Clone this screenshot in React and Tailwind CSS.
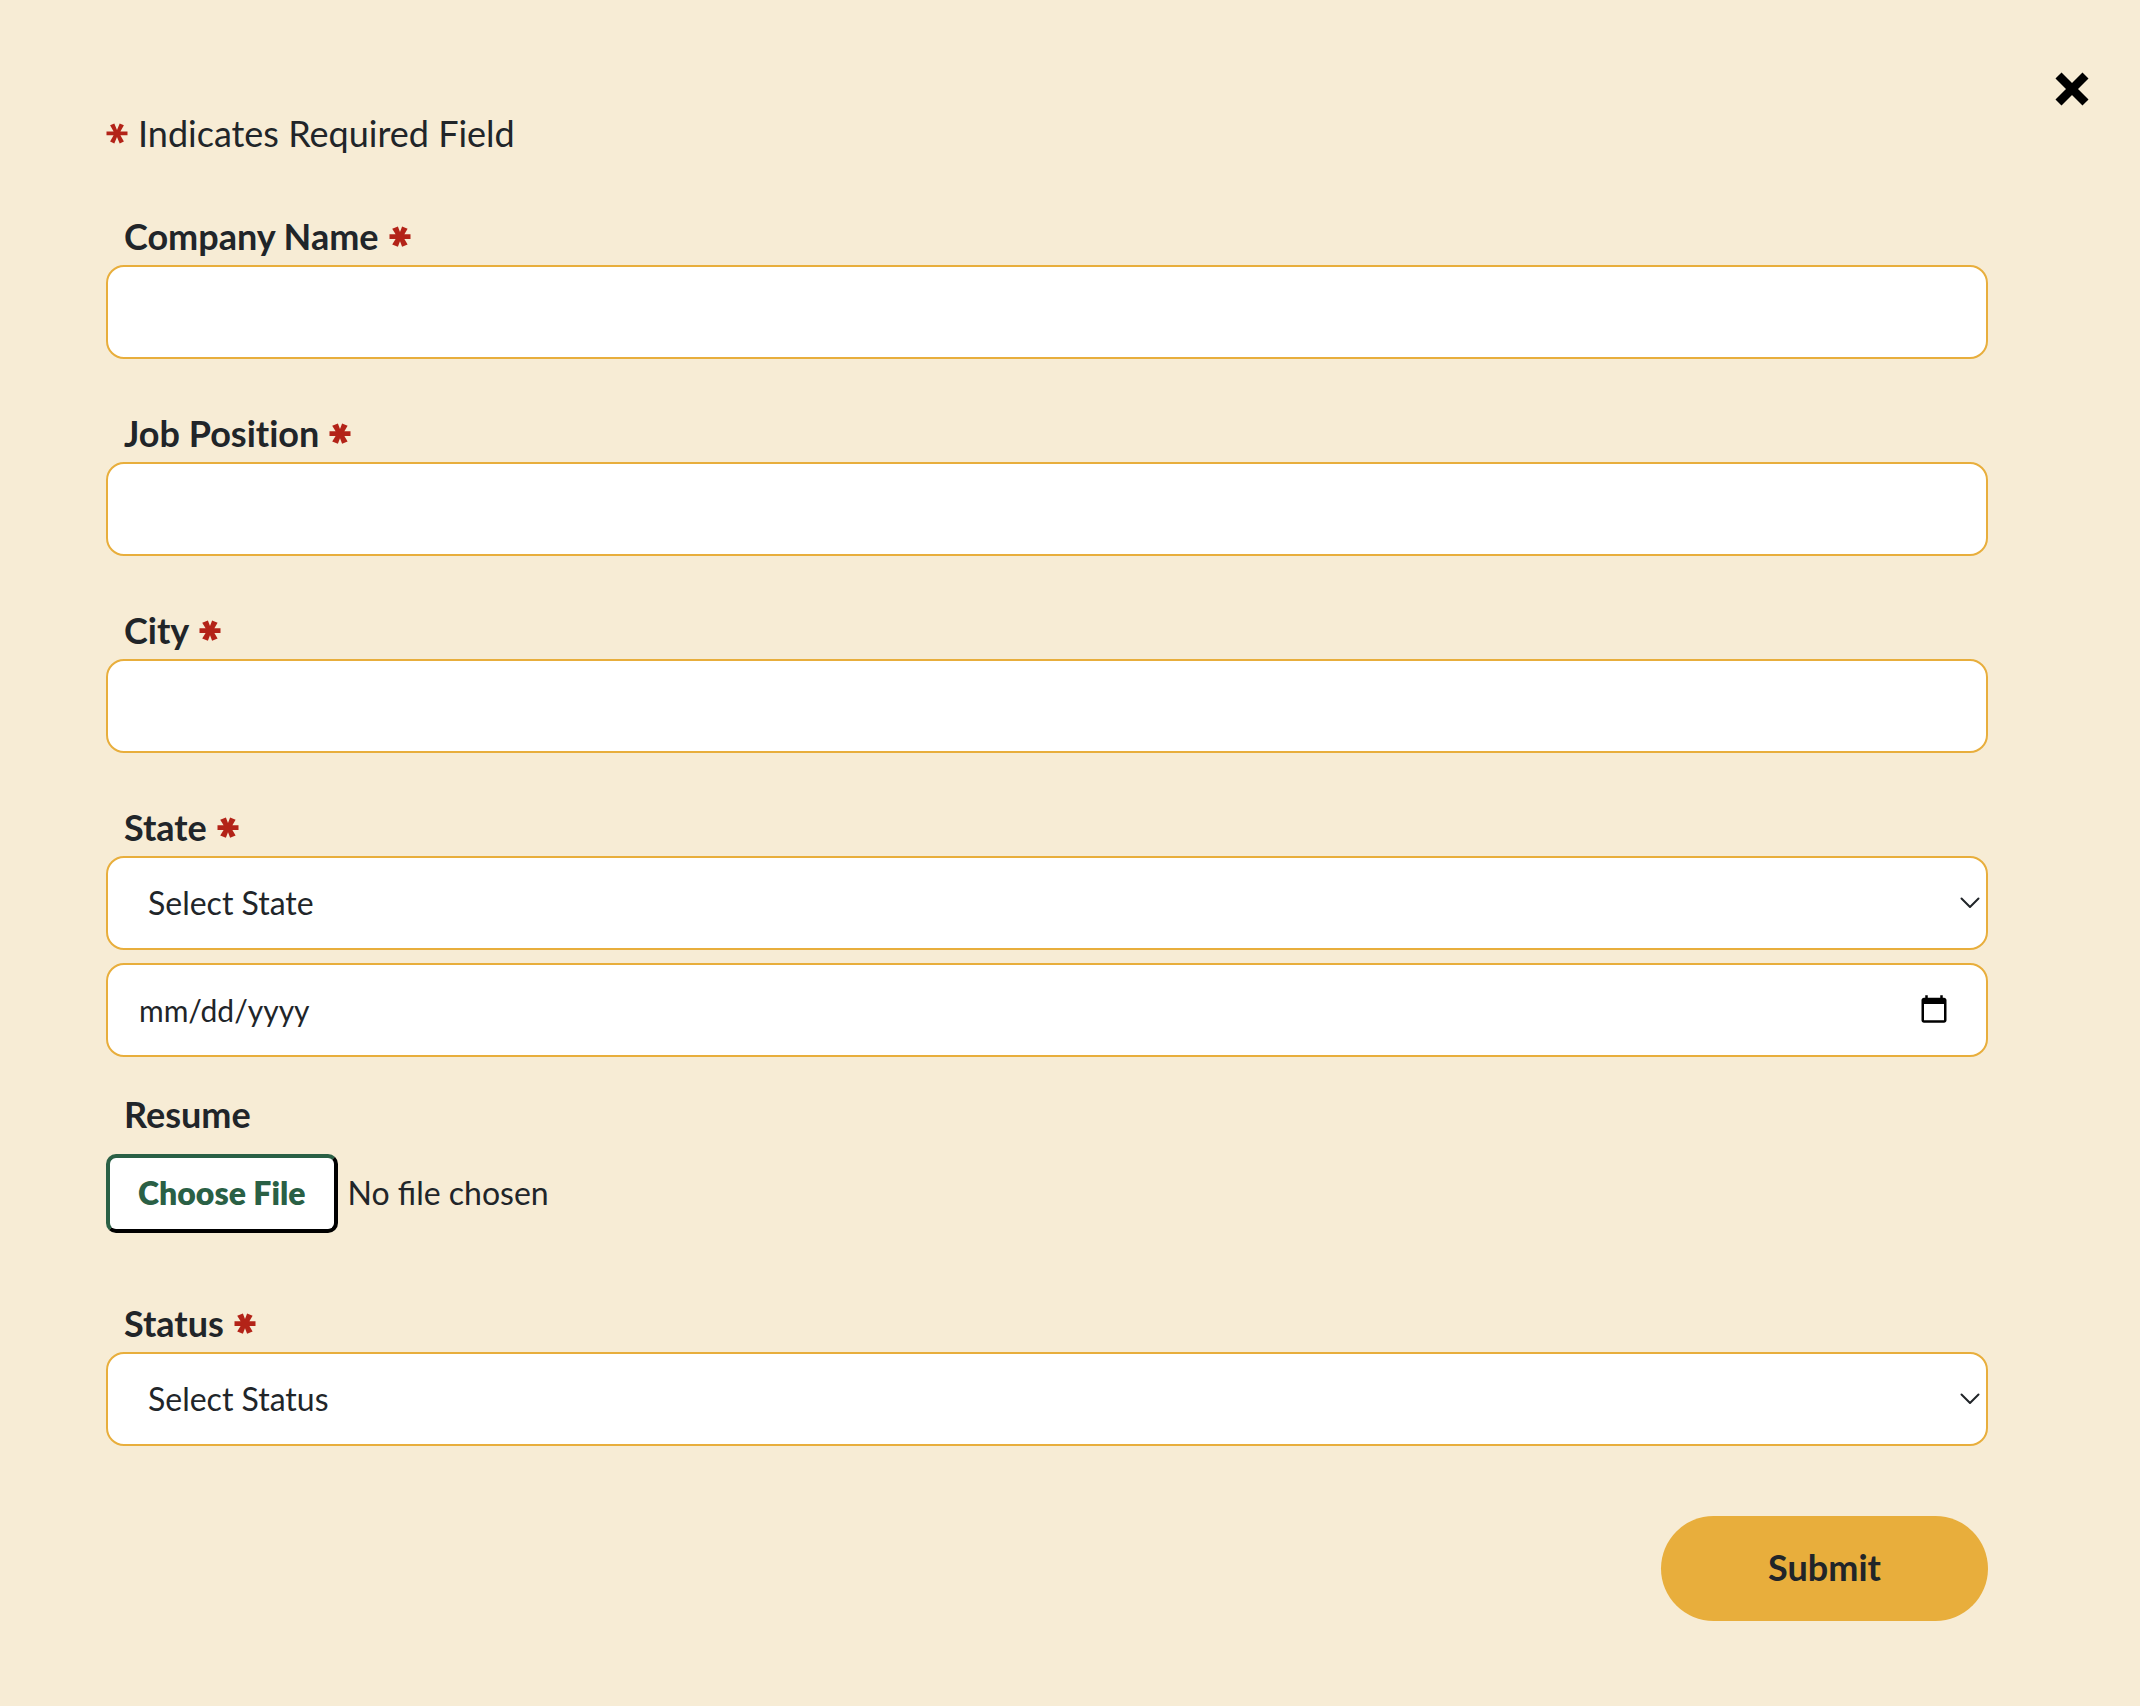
const control =
  "block h-[94px] w-full rounded-[18px] border-2 border-[#e8ae3c] bg-white text-[32px] text-[#212529] outline-none focus:ring-2 focus:ring-[#e8ae3c]";

function RequiredMark({ bold }) {
  return (
    <svg width="22" height="22" viewBox="0 0 22 22" fill="#b32318" aria-hidden="true" className="shrink-0">
      {bold ? (
        <path d="M0.5 9.3 L6.6 9.3 L3.2 3.8 L8.9 1.4 L11 7 L13.1 1.4 L18.6 3.8 L15.4 9.3 L21.5 9.3 V13.9 L15.4 13.9 L18.6 19.4 L13.1 21.8 L11 16.2 L8.9 21.8 L3.2 19.4 L6.6 13.9 L0.5 13.9 Z" />
      ) : (
        <path d="M0.5 9.6 L7.6 9.6 L4.1 3.2 L8.3 1.4 L11 7.9 L13.7 1.4 L17.9 3.2 L14.4 9.6 L21.5 9.6 V13.2 L14.4 13.2 L17.9 19.6 L13.7 21.4 L11 14.9 L8.3 21.4 L4.1 19.6 L7.6 13.2 L0.5 13.2 Z" />
      )}
    </svg>
  );
}

function Label({ htmlFor, children, required }) {
  return (
    <label
      htmlFor={htmlFor}
      className="flex items-center gap-2.5 pl-[18px] text-[36px] leading-[38px] font-bold [font-variant-ligatures:no-common-ligatures]"
    >
      {children}
      {required && <RequiredMark bold />}
    </label>
  );
}

function TextField({ id, label }) {
  return (
    <div className="flex flex-col gap-2.5">
      <Label htmlFor={id} required>{label}</Label>
      <input id={id} type="text" required className={`${control} px-8`} />
    </div>
  );
}

function SelectField({ id, label, placeholder }) {
  return (
    <div className="flex flex-col gap-2.5">
      <Label htmlFor={id} required>{label}</Label>
      <div className="relative">
        <select id={id} required className={`${control} appearance-none pr-12 pl-10`}>
          <option>{placeholder}</option>
        </select>
        <svg
          width="20"
          height="12"
          viewBox="0 0 20 12"
          fill="none"
          stroke="#212529"
          strokeWidth="2"
          strokeLinecap="round"
          strokeLinejoin="round"
          aria-hidden="true"
          className="pointer-events-none absolute top-1/2 right-2 -translate-y-1/2"
        >
          <path d="M1.5 1.5 L10 10 L18.5 1.5" />
        </svg>
      </div>
    </div>
  );
}

export default function App() {
  return (
    <main className="relative min-h-screen bg-[#f7ecd5] pt-[114px] pr-[152px] pb-[85px] pl-[106px] font-[Lato,sans-serif] text-[#212529]">
      <button type="button" aria-label="Close" className="absolute top-[69px] right-12 p-0.5">
        <svg width="36" height="36" viewBox="0 0 36 36" fill="none" stroke="#000" strokeWidth="8.5" aria-hidden="true">
          <path d="M4.5 4.5 L31.5 31.5 M31.5 4.5 L4.5 31.5" />
        </svg>
      </button>

      <p className="flex items-center gap-2.5 text-[36px] leading-[38px]">
        <RequiredMark />
        Indicates Required Field
      </p>

      <form className="mt-[65px]" onSubmit={(e) => e.preventDefault()}>
        <div className="flex flex-col gap-[55px]">
          <TextField id="company" label="Company Name" />
          <TextField id="position" label="Job Position" />
          <TextField id="city" label="City" />
          <SelectField id="state" label="State" placeholder="Select State" />
        </div>

        <input
          type="date"
          aria-label="Date"
          className={`${control} mt-[13px] pr-[34px] pl-[31px] [&::-webkit-datetime-edit]:text-[30px] [&::-webkit-datetime-edit-day-field]:px-0 [&::-webkit-datetime-edit-month-field]:px-0 [&::-webkit-datetime-edit-year-field]:px-0`}
        />

        <div className="mt-[38px] flex flex-col gap-[21px]">
          <Label htmlFor="resume">Resume</Label>
          <input
            id="resume"
            type="file"
            className="block h-20 w-full text-[32px] file:mr-2.5 file:h-[79px] file:rounded-[10px] file:border-4 file:border-solid file:border-t-[#2a6045] file:border-r-black file:border-b-black file:border-l-[#2a6045] file:bg-white file:px-7 file:pb-0.5 file:font-extrabold file:text-[#2a6045]"
          />
        </div>

        <div className="mt-[70px]">
          <SelectField id="status" label="Status" placeholder="Select Status" />
        </div>

        <div className="mt-[70px] flex justify-end">
          <button type="submit" className="h-[105px] w-[327px] rounded-full bg-[#e8ae3c] pb-1 text-[36px] font-bold">
            Submit
          </button>
        </div>
      </form>
    </main>
  );
}
